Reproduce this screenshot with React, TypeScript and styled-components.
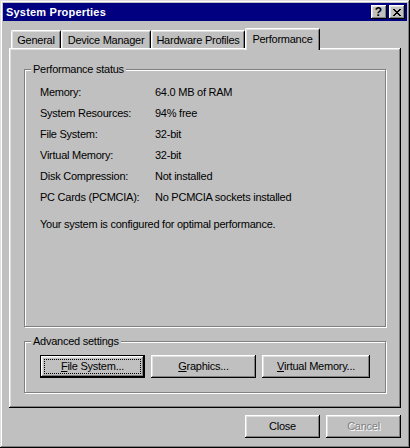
import React from "react";
import styled, { createGlobalStyle } from "styled-components";

const GlobalStyle = createGlobalStyle`
  html, body {
    margin: 0;
    padding: 0;
    background: #c0c0c0;
  }
  body {
    font-family: "Liberation Sans", Arial, sans-serif;
    font-size: 11px;
    letter-spacing: -0.25px;
    color: #000;
  }
  * {
    box-sizing: border-box;
  }
`;

const bevelOut = `
  box-shadow: inset -1px -1px #000, inset 1px 1px #fff,
    inset -2px -2px #808080, inset 2px 2px #dfdfdf;
`;

const Window = styled.div`
  width: 410px;
  height: 448px;
  padding: 3px;
  background: #c0c0c0;
  display: flex;
  flex-direction: column;
  box-shadow: inset -1px -1px #000, inset 1px 1px #dfdfdf,
    inset -2px -2px #808080, inset 2px 2px #fff;
`;

const TitleBar = styled.div`
  height: 18px;
  background: #000080;
  display: flex;
  align-items: center;
  padding: 0 2px 0 3px;
`;

const TitleText = styled.span`
  flex: 1;
  color: #fff;
  font-weight: bold;
  letter-spacing: 0.2px;
`;

const CaptionButtons = styled.div`
  display: flex;
  gap: 2px;
`;

const CaptionButton = styled.div`
  width: 16px;
  height: 14px;
  background: #c0c0c0;
  display: flex;
  align-items: center;
  justify-content: center;
  font-weight: bold;
  font-size: 12px;
  line-height: 1;
  letter-spacing: 0;
  padding-right: 1px;
  ${bevelOut}
`;

const Body = styled.div`
  flex: 1;
  display: flex;
  flex-direction: column;
  padding: 7px 6px 0 6px;
`;

const TabRow = styled.div`
  height: 20px;
  display: flex;
  align-items: flex-end;
  padding-left: 2px;
`;

const Tab = styled.div<{ $width: number; $active?: boolean }>`
  position: relative;
  z-index: ${({ $active }) => ($active ? 2 : 0)};
  width: ${({ $width }) => $width}px;
  height: ${({ $active }) => ($active ? 22 : 18)}px;
  margin-bottom: ${({ $active }) => ($active ? -2 : 0)}px;
  display: flex;
  align-items: center;
  justify-content: center;
  background: #c0c0c0;
  border-top: 1px solid #fff;
  border-left: 1px solid #fff;
  border-right: 1px solid #000;
  border-radius: 2px 2px 0 0;
  box-shadow: inset 1px 1px #dfdfdf, inset -1px 0 #808080;
  padding-bottom: ${({ $active }) => ($active ? 1 : 0)}px;
`;

const Panel = styled.div`
  position: relative;
  z-index: 1;
  flex: 1;
  display: flex;
  flex-direction: column;
  padding: 21px 15px 15px 15px;
  background: #c0c0c0;
  ${bevelOut}
`;

const GroupBox = styled.div<{ $grow?: boolean; $gap?: number }>`
  flex: ${({ $grow }) => ($grow ? 1 : "none")};
  margin-top: ${({ $gap }) => $gap ?? 0}px;
  border: 1px solid #808080;
  box-shadow: 1px 1px 0 #fff, inset 1px 1px 0 #fff;
  display: flex;
  flex-direction: column;
`;

const GroupCaption = styled.div`
  width: fit-content;
  margin: -7px 0 0 6px;
  padding: 0 2px;
  line-height: 13px;
  background: #c0c0c0;
`;

const StatusGrid = styled.div`
  display: grid;
  grid-template-columns: 115px 1fr;
  grid-auto-rows: 21px;
  align-items: center;
  padding: 5px 0 0 15px;
`;

const StatusNote = styled.div`
  margin-top: 7px;
  padding-left: 15px;
  line-height: 21px;
`;

const ButtonRow = styled.div`
  display: flex;
  gap: 6px;
  padding: 7px 0 14px 15px;
`;

const Button = styled.div<{ $width: number; $default?: boolean; $disabled?: boolean }>`
  width: ${({ $width }) => $width}px;
  height: 23px;
  display: flex;
  align-items: stretch;
  padding: ${({ $default }) => ($default ? 3 : 4)}px;
  background: #c0c0c0;
  border: ${({ $default }) => ($default ? "1px solid #000" : "none")};
  ${bevelOut}
  color: ${({ $disabled }) => ($disabled ? "#808080" : "#000")};
  text-shadow: ${({ $disabled }) => ($disabled ? "1px 1px 0 #fff" : "none")};
  cursor: default;
`;

const ButtonLabel = styled.span<{ $focused?: boolean }>`
  flex: 1;
  display: flex;
  align-items: center;
  justify-content: center;
  border: 1px dotted ${({ $focused }) => ($focused ? "#000" : "transparent")};
  padding-bottom: 1px;
  u {
    text-decoration: underline;
    text-underline-offset: 1px;
  }
`;

const Footer = styled.div`
  display: flex;
  justify-content: flex-end;
  gap: 6px;
  padding: 7px 0 7px;
`;

const CloseGlyph = () => (
  <svg width="8" height="7" viewBox="0 0 8 7" shapeRendering="crispEdges">
    <path
      fill="#000"
      d="M0 0h2v1H0zM6 0h2v1H6zM1 1h2v1H1zM5 1h2v1H5zM2 2h4v1H2zM3 3h2v1H3zM2 4h4v1H2zM1 5h2v1H1zM5 5h2v1H5zM0 6h2v1H0zM6 6h2v1H6z"
    />
  </svg>
);

const statusRows: [string, string][] = [
  ["Memory:", "64.0 MB of RAM"],
  ["System Resources:", "94% free"],
  ["File System:", "32-bit"],
  ["Virtual Memory:", "32-bit"],
  ["Disk Compression:", "Not installed"],
  ["PC Cards (PCMCIA):", "No PCMCIA sockets installed"],
];

const tabs = [
  { label: "General", width: 50 },
  { label: "Device Manager", width: 90 },
  { label: "Hardware Profiles", width: 94 },
  { label: "Performance", width: 75, active: true },
];

export default function App() {
  return (
    <>
      <GlobalStyle />
      <Window>
        <TitleBar>
          <TitleText>System Properties</TitleText>
          <CaptionButtons>
            <CaptionButton>?</CaptionButton>
            <CaptionButton>
              <CloseGlyph />
            </CaptionButton>
          </CaptionButtons>
        </TitleBar>
        <Body>
          <TabRow>
            {tabs.map((t) => (
              <Tab key={t.label} $width={t.width} $active={t.active}>
                {t.label}
              </Tab>
            ))}
          </TabRow>
          <Panel>
            <GroupBox $grow>
              <GroupCaption>Performance status</GroupCaption>
              <StatusGrid>
                {statusRows.map(([label, value]) => (
                  <React.Fragment key={label}>
                    <span>{label}</span>
                    <span>{value}</span>
                  </React.Fragment>
                ))}
              </StatusGrid>
              <StatusNote>
                Your system is configured for optimal performance.
              </StatusNote>
            </GroupBox>
            <GroupBox $gap={14}>
              <GroupCaption>Advanced settings</GroupCaption>
              <ButtonRow>
                <Button $width={105} $default>
                  <ButtonLabel $focused>
                    <u>F</u>ile System...
                  </ButtonLabel>
                </Button>
                <Button $width={105}>
                  <ButtonLabel>
                    <u>G</u>raphics...
                  </ButtonLabel>
                </Button>
                <Button $width={108}>
                  <ButtonLabel>
                    <u>V</u>irtual Memory...
                  </ButtonLabel>
                </Button>
              </ButtonRow>
            </GroupBox>
          </Panel>
          <Footer>
            <Button $width={75}>
              <ButtonLabel>Close</ButtonLabel>
            </Button>
            <Button $width={75} $disabled>
              <ButtonLabel>Cancel</ButtonLabel>
            </Button>
          </Footer>
        </Body>
      </Window>
    </>
  );
}
